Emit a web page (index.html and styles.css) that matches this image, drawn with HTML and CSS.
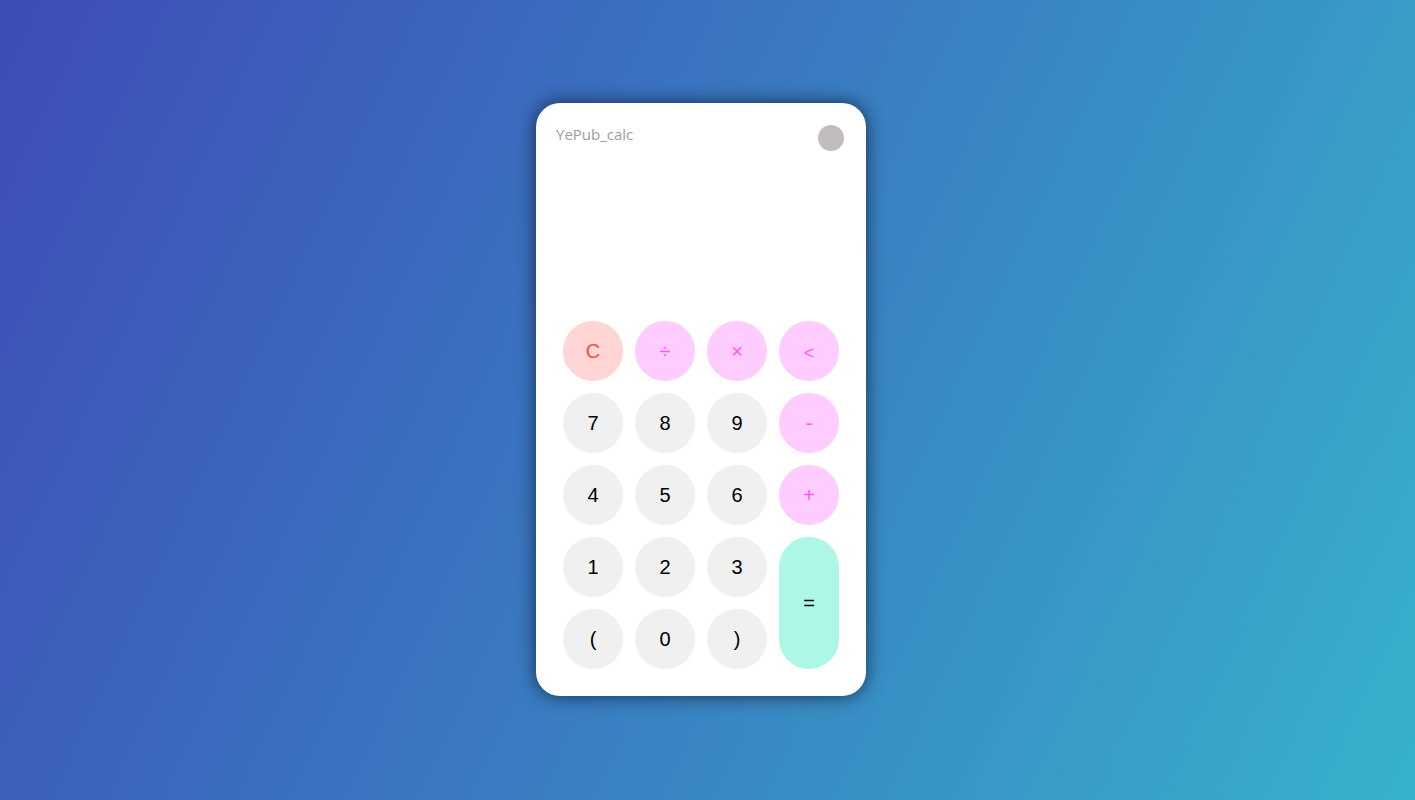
FILE: index.html
```html
<!DOCTYPE html>
<html>
<head>
<meta charset="utf-8">
<link rel="stylesheet" href="styles.css">
</head>
<body>
<div class="page">
  <div class="card">
    <div class="header">
      <span class="title">YePub_calc</span>
      <span class="toggle"></span>
    </div>
    <div class="display"></div>
    <div class="keys">
      <div class="key clear">C</div>
      <div class="key op">÷</div>
      <div class="key op">×</div>
      <div class="key op back">&lt;</div>
      <div class="key">7</div>
      <div class="key">8</div>
      <div class="key">9</div>
      <div class="key op">-</div>
      <div class="key">4</div>
      <div class="key">5</div>
      <div class="key">6</div>
      <div class="key op">+</div>
      <div class="key">1</div>
      <div class="key">2</div>
      <div class="key">3</div>
      <div class="key eq">=</div>
      <div class="key">(</div>
      <div class="key">0</div>
      <div class="key">)</div>
    </div>
  </div>
</div>
</body>
</html>
```
FILE: styles.css
```css
html, body {
  margin: 0;
  height: 100%;
}
body {
  background: linear-gradient(115deg, #3e4cb8 0%, #3a78c0 45%, #36b1cc 100%);
  font-family: "Liberation Sans", Arial, sans-serif;
}
.page {
  height: 100%;
  display: flex;
  align-items: center;
  justify-content: center;
  padding-right: 13px;
  padding-bottom: 1px;
  box-sizing: border-box;
}
.card {
  width: 330px;
  height: 593px;
  background: #fff;
  border-radius: 24px;
  box-shadow: 0 0 18px rgba(10, 20, 40, 0.75);
  box-sizing: border-box;
  padding: 22px 0 27px 0;
  display: flex;
  flex-direction: column;
}
.header {
  display: flex;
  justify-content: space-between;
  align-items: center;
  padding: 0 22px 0 20px;
  height: 26px;
}
.title {
  font-family: "Open Sans", "Noto Sans", sans-serif;
  font-size: 15px;
  color: #a19b9b;
  margin-top: -8px;
}
.toggle {
  width: 26px;
  height: 26px;
  border-radius: 50%;
  background: #c1bdbf;
}
.display {
  flex: 1;
}
.keys {
  display: grid;
  grid-template-columns: repeat(4, 60px);
  grid-auto-rows: 60px;
  gap: 12px;
  padding: 0 27px;
}
.key {
  border-radius: 30px;
  background: #f0f0f0;
  color: #000;
  font-size: 20px;
  display: flex;
  align-items: center;
  justify-content: center;
}
.key.clear {
  background: #ffd5d5;
  color: #ff4a4a;
}
.key.op {
  background: #ffccff;
  color: #ff55ff;
}
.key.back {
  font-size: 18px;
  padding-top: 5px;
  box-sizing: border-box;
}
.key.eq {
  background: #adf7e6;
  grid-row: span 2;
}
```
